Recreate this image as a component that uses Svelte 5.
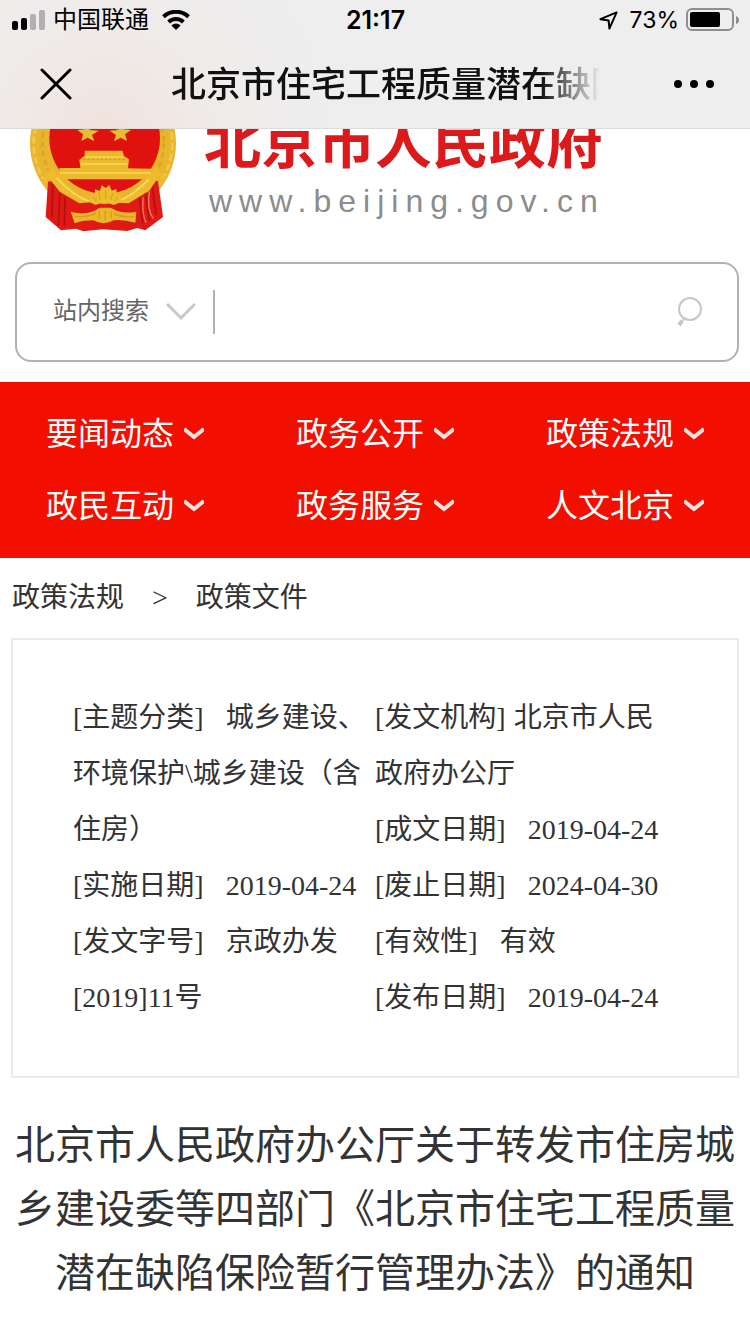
<script lang="ts">
  const navItems = ['要闻动态', '政务公开', '政策法规', '政民互动', '政务服务', '人文北京'];

  // The document details are split in two columns
  const details = [
    [
      { label: '主题分类', value: '城乡建设、环境保护\\城乡建设（含住房）' },
      { label: '实施日期', value: '2019-04-24' },
      { label: '发文字号', value: '京政办发[2019]11号' }
    ],
    [
      { label: '发文机构', value: '北京市人民政府办公厅', tight: true },
      { label: '成文日期', value: '2019-04-24' },
      { label: '废止日期', value: '2024-04-30' },
      { label: '有效性', value: '有效' },
      { label: '发布日期', value: '2019-04-24' }
    ]
  ];

  let keyword = $state('');
</script>

<header class="top">
  <div class="status">
    <div class="status-left">
      <svg width="34" height="22" viewBox="0 0 34 22" aria-hidden="true">
        <rect x="0" y="12" width="6" height="9" rx="2" />
        <rect x="9" y="9" width="6" height="12" rx="2" />
        <rect x="18" y="5" width="6" height="16" rx="2" fill="#b0b0b0" />
        <rect x="27" y="1" width="6" height="20" rx="2" fill="#b0b0b0" />
      </svg>
      <span>中国联通</span>
      <svg class="wifi" width="28" height="20" viewBox="0 0 28 20" fill="none" stroke="#000" stroke-width="4" aria-hidden="true">
        <path d="M1.5 6.8a18 18 0 0 1 25 0" />
        <path d="M6.6 12a10.6 10.6 0 0 1 14.8 0" />
        <path d="M14 20l-4.6-4.6a6.6 6.6 0 0 1 9.2 0z" fill="#000" stroke="none" />
      </svg>
    </div>
    <time>21:17</time>
    <div class="status-right">
      <svg width="19" height="19" viewBox="0 0 19 19" fill="none" stroke="#000" stroke-width="2" stroke-linejoin="round" aria-hidden="true">
        <path d="M17.6 1.4L1.4 8.2l8.2 1.2.8 8.2z" />
      </svg>
      <span class="percent">73%</span>
      <svg width="53" height="24" viewBox="0 0 53 24" aria-hidden="true">
        <rect x="1" y="1" width="46" height="21" rx="5" fill="none" stroke="#8e8e8e" stroke-width="2" />
        <rect x="4" y="4" width="30" height="15" rx="2" />
        <path d="M50 8v8q3-1 3-4t-3-4z" fill="#8e8e8e" />
      </svg>
    </div>
  </div>
  <div class="bar">
    <button aria-label="关闭">
      <svg width="32" height="32" viewBox="0 0 32 32" stroke="#000" stroke-width="3" stroke-linecap="round">
        <path d="M2 2l28 28M30 2L2 30" />
      </svg>
    </button>
    <div class="page-name">北京市住宅工程质量潜在缺陷</div>
    <button aria-label="更多">
      <svg width="42" height="10" viewBox="0 0 42 10">
        <circle cx="5" cy="5" r="4" />
        <circle cx="21" cy="5" r="4" />
        <circle cx="37" cy="5" r="4" />
      </svg>
    </button>
  </div>
</header>

<main>
  <a class="brand" href="/">
    <svg class="emblem" width="150" height="165" viewBox="54 -156 450 495" aria-hidden="true">
      <circle cx="279" cy="70" r="219" fill="#e9b52d" />
      <circle cx="279" cy="70" r="208" fill="none" stroke="#f0c64a" stroke-width="9" stroke-dasharray="22 9" />
      <circle cx="279" cy="70" r="182" fill="none" stroke="#dca526" stroke-width="8" stroke-dasharray="16 12" />
      <circle cx="284" cy="55" r="166" fill="#df1210" />
      <path d="M114 185l38-6 60 62 70 12 76-12 64-62 22 4 15 108-53 40-24-7-30 9-74-5-58 6-22-8-45 5-46-40z" fill="#df1a14" />
      <path d="M128 192l-2 100M150 212l-5 105M165 230l-2 88M426 192l12 92M404 206l14 96M388 228l10 82" fill="none" stroke="#b80e12" stroke-width="5" />
      <path d="M418 214q-8 55 12 82M400 232q-6 44 8 76" fill="none" stroke="#f07a5c" stroke-width="4" />
      <path d="M232 14l6 16 28 2-20 13 7 19-20-11-19 10 5-20-17-13 23-2zM332 14l-7 16-26 2 19 13-6 19 20-11 19 10-6-20 18-13-23-2z" fill="#e9bd30" />
      <path d="M281-95l17 48h50l-40 30 16 48-43-30-43 30 16-48-40-30h50z" fill="#e9bd30" />
      <path d="M224 92h114l4 16 15 10-3 27 70 1v32H148v-34h63l-3-25 16-12z" fill="#ecb92d" />
      <path d="M226 111h112M213 132h140M150 159h272" stroke="#f8d65a" stroke-width="4" />
      <path d="M220 118h128" stroke="#d89c20" stroke-width="4" stroke-dasharray="7 6" />
      <path d="M126 139l30 42q30 26 54 49l32 17-34 3-58-34-36-45-10 30-8-17zM436 139l-28 43q-34 28-58 49l-28 17 34 2 62-38 30-45 10 27 8-18z" fill="#eeba2e" />
      <path d="M140 174q50 54 98 70M416 178q-46 48-92 66" fill="none" stroke="#f9dc68" stroke-width="5" />
      <path d="M236 245l4-23 14 3 1-17 15 5 5-18 12 9 11-9 7 17 14-5 2 17 12-2 2 23-24 10q-27-14-54 0z" fill="#eebd2d" />
      <path d="M258 243l-9-14M270 239l-4-22M287 237v-28M302 239l7-20M315 243l9-14" stroke="#dba526" stroke-width="4" />
      <path d="M182 275q40 10 70-2l18-10h32l20 10q26 8 57 2l-3 33q-37-10-64-7-32 17-62 0-34 0-56 9z" fill="#eab72a" />
      <path d="M196 289q32 4 62-8M374 289q-34 6-62-8M268 274v22M286 272v30M304 274v22" fill="none" stroke="#d69a20" stroke-width="4" />
    </svg>
    <span class="brand-text">
      <strong>北京市人民政府</strong>
      <span class="domain">www.beijing.gov.cn</span>
    </span>
  </a>

  <form class="search">
    <div class="scope">
      <select aria-label="搜索范围">
        <option>站内搜索</option>
      </select>
      <svg width="30" height="18" viewBox="0 0 30 18" fill="none" stroke="#c8c8c8" stroke-width="3" aria-hidden="true">
        <path d="M1 1l14 14L29 1" />
      </svg>
    </div>
    <input type="text" aria-label="搜索关键词" bind:value={keyword} />
    <button aria-label="搜索">
      <svg width="26" height="30" viewBox="0 0 26 30" fill="none" stroke="#c6c6c6">
        <circle cx="13" cy="12" r="11" stroke-width="2" />
        <path d="M7 22l-2 2" stroke-width="2" />
        <path d="M5 24l-3 4" stroke-width="4" />
      </svg>
    </button>
  </form>

  <nav class="menu">
    {#each navItems as item}
      <button>
        {item}
        <svg width="20" height="14" viewBox="0 0 20 14" fill="none" stroke="#ffe3e0" stroke-width="4" aria-hidden="true">
          <path d="M0 2l10 8 10-8" />
        </svg>
      </button>
    {/each}
  </nav>

  <div class="crumbs">
    <a href="/policy">政策法规</a>
    <span>&gt;</span>
    <a href="/policy/files">政策文件</a>
  </div>

  <section class="details">
    {#each details as column}
      <dl>
        {#each column as row}
          <div>
            <dt>[{row.label}]</dt><dd class:tight={row.tight}>{row.value}</dd>
          </div>
        {/each}
      </dl>
    {/each}
  </section>

  <h1>北京市人民政府办公厅关于转发市住房城乡建设委等四部门《北京市住宅工程质量潜在缺陷保险暂行管理办法》的通知</h1>
</main>

<style>
  :global(body) {
    background: #fff;
    color: #333;
    font-family: 'Liberation Serif', 'Noto Sans CJK SC', serif;
    font-size: 28px;
  }

  button,
  select,
  input {
    padding: 0;
    border: 0;
    background: none;
    color: inherit;
    font: inherit;
  }

  svg {
    display: block;
    flex: none;
  }

  a {
    color: inherit;
    text-decoration: none;
  }

  .top {
    position: sticky;
    top: 0;
    z-index: 1;
    background: radial-gradient(circle at 104px 140px, #f1e2dc, #efebe9 110px, #eeeeef 240px);
    border-bottom: 1px solid #dcdcdc;
    color: #000;
    font-family: Inter, 'Noto Sans CJK SC', sans-serif;
  }

  .status {
    display: grid;
    grid-template-columns: 1fr auto 1fr;
    align-items: center;
    height: 40px;
    padding: 0 11px 0 12px;
    font-size: 24px;
    line-height: 40px;
  }

  .status-left,
  .status-right {
    display: flex;
    align-items: center;
    gap: 7px;
  }

  .status-right {
    justify-content: flex-end;
  }

  .wifi {
    margin-left: 6px;
  }

  .percent {
    margin-left: 5px;
    font-size: 23px;
  }

  time {
    font-size: 25px;
    font-weight: 600;
  }

  .bar {
    display: flex;
    align-items: center;
    height: 88px;
    padding: 0 35px 0 40px;
  }

  .page-name {
    width: 428px;
    margin: 0 auto 0 99px;
    overflow: hidden;
    white-space: nowrap;
    font-size: 35px;
    font-weight: 500;
    line-height: 88px;
    color: #111;
    mask-image: linear-gradient(to right, #000 370px, transparent 430px);
  }

  /* Scrolled partly under the top bar */
  .brand {
    display: flex;
    align-items: flex-end;
    gap: 26px;
    margin-top: -61px;
    padding: 0 28px 29px;
  }

  .brand-text {
    display: flex;
    flex-direction: column;
    padding-bottom: 14px;
    font-family: 'Liberation Sans', 'Noto Sans CJK SC', sans-serif;
  }

  .brand-text strong {
    color: #dc1a1c;
    font-size: 57px;
    line-height: 80px;
  }

  .domain {
    padding-left: 5px;
    color: #8c8c8c;
    font-size: 32px;
    letter-spacing: 7px;
    line-height: 36px;
  }

  .search {
    display: flex;
    align-items: center;
    height: 96px;
    margin: 0 11px 20px 15px;
    padding: 0 34px 0 36px;
    border: 2px solid #b2b2b2;
    border-radius: 16px;
    font-family: 'Liberation Sans', 'Noto Sans CJK SC', sans-serif;
    font-size: 24px;
  }

  .scope {
    display: flex;
    align-items: center;
    gap: 17px;
    height: 44px;
    padding-right: 17px;
    border-right: 2px solid #b2b2b2;
  }

  .scope select {
    appearance: none;
    height: 44px;
    padding-bottom: 4px;
    color: #666;
  }

  .search input {
    flex: 1;
    min-width: 0;
    height: 44px;
    padding: 0 16px;
    outline: none;
  }

  .menu {
    display: grid;
    grid-template-columns: repeat(3, 1fr);
    padding: 16px 0;
    background: #f30f00;
    color: #fff;
    font-family: 'Liberation Sans', 'Noto Sans CJK SC', sans-serif;
    font-size: 32px;
  }

  .menu button {
    display: flex;
    align-items: center;
    justify-content: center;
    gap: 10px;
    height: 72px;
    line-height: 72px;
  }

  .crumbs {
    display: flex;
    align-items: center;
    gap: 28px;
    height: 80px;
    padding: 0 12px;
    line-height: 56px;
  }

  .details {
    display: grid;
    grid-template-columns: 1fr 1fr;
    margin: 0 11px;
    padding: 50px 60px;
    border: 2px solid #ebebe3;
    line-height: 56px;
  }

  dl {
    margin: 0;
  }

  dt,
  dd {
    display: inline;
    margin: 0;
  }

  dd {
    margin-left: 22px;
  }

  dd.tight {
    margin-left: 8px;
  }

  h1 {
    margin: 36px 12px 28px;
    font-size: 40px;
    font-weight: 400;
    line-height: 64px;
    text-align: center;
  }
</style>
